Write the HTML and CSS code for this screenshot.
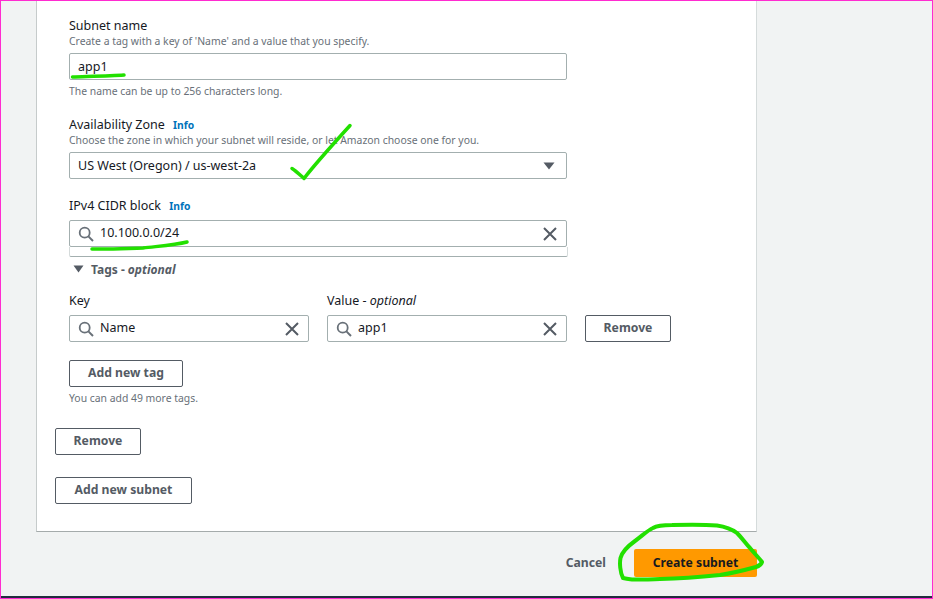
FILE: index.html
```html
<!DOCTYPE html>
<html lang="en">
<head>
    <meta charset="UTF-8">
    <title>Create subnet</title>
    <link rel="stylesheet" href="styles.css">
</head>
<body>
    <div class="page">
        <div class="card">
            <div class="subnet">
                <div class="field">
                    <div class="label">Subnet name</div>
                    <div class="desc">Create a tag with a key of 'Name' and a value that you specify.</div>
                    <div class="input"><span class="value">app1</span></div>
                    <div class="desc hint">The name can be up to 256 characters long.</div>
                </div>
                <div class="field">
                    <div class="label">Availability Zone <a class="info">Info</a></div>
                    <div class="desc">Choose the zone in which your subnet will reside, or let Amazon choose one for you.</div>
                    <div class="input select">
                        <span class="value">US West (Oregon) / us-west-2a</span>
                        <svg class="caret" width="12" height="8" viewBox="0 0 12 8"><path d="M0.5 0.5h11L6 7.5z" fill="#545b64"/></svg>
                    </div>
                </div>
                <div class="field cidr">
                    <div class="label label-tight">IPv4 CIDR block <a class="info">Info</a></div>
                    <div class="input">
                        <svg class="search" width="16" height="16" viewBox="0 0 16 16"><circle cx="6.7" cy="6.7" r="5" fill="none" stroke="#687078" stroke-width="1.8"/><path d="M10.4 10.4L15 15" stroke="#687078" stroke-width="2"/></svg>
                        <span class="value">10.100.0.0/24</span>
                        <svg class="clear" width="14" height="14" viewBox="0 0 14 14"><path d="M1 1l12 12M13 1L1 13" stroke="#545b64" stroke-width="2"/></svg>
                    </div>
                    <div class="dropdown-edge"></div>
                </div>
                <div class="tags-head">
                    <svg width="11" height="8" viewBox="0 0 11 8"><path d="M0.5 0.5h10L5.5 7.5z" fill="#545b64"/></svg>
                    <span>Tags - <em>optional</em></span>
                </div>
                <div class="tag-row">
                    <div class="tag-col">
                        <div class="label label-tight">Key</div>
                        <div class="input">
                            <svg class="search" width="16" height="16" viewBox="0 0 16 16"><circle cx="6.7" cy="6.7" r="5" fill="none" stroke="#687078" stroke-width="1.8"/><path d="M10.4 10.4L15 15" stroke="#687078" stroke-width="2"/></svg>
                            <span class="value">Name</span>
                            <svg class="clear" width="14" height="14" viewBox="0 0 14 14"><path d="M1 1l12 12M13 1L1 13" stroke="#545b64" stroke-width="2"/></svg>
                        </div>
                    </div>
                    <div class="tag-col">
                        <div class="label label-tight">Value - <em>optional</em></div>
                        <div class="input">
                            <svg class="search" width="16" height="16" viewBox="0 0 16 16"><circle cx="6.7" cy="6.7" r="5" fill="none" stroke="#687078" stroke-width="1.8"/><path d="M10.4 10.4L15 15" stroke="#687078" stroke-width="2"/></svg>
                            <span class="value">app1</span>
                            <svg class="clear" width="14" height="14" viewBox="0 0 14 14"><path d="M1 1l12 12M13 1L1 13" stroke="#545b64" stroke-width="2"/></svg>
                        </div>
                    </div>
                    <button class="btn remove-tag">Remove</button>
                </div>
                <button class="btn add-tag">Add new tag</button>
                <div class="desc tags-left">You can add 49 more tags.</div>
            </div>
            <button class="btn remove-subnet">Remove</button>
            <button class="btn add-subnet">Add new subnet</button>
        </div>
        <div class="actions">
            <a class="cancel">Cancel</a>
            <button class="btn-primary">Create subnet</button>
        </div>
    </div>
    <div class="footer-line"></div>
    <!-- green marker scribbles drawn over the screenshot -->
    <svg class="marks" width="933" height="599" viewBox="0 0 933 599" fill="none" stroke="#22e000" stroke-linecap="round" stroke-linejoin="round">
        <path d="M72.500 77C85 76.500 110 76 124 75" stroke-width="3.500"/>
        <path d="M292 168.500C296 171 300 175 304 178.500C312 168 335 142 350 125.500" stroke-width="3.500"/>
        <path d="M92 249C110 249.500 125 248.500 143 248C160 246 175 245 187 242" stroke-width="3.500"/>
        <path d="M632 579.500C628 579 625 578.500 623 578C620 572 619.500 563 620.500 558C622 552 628 546 635 541C642 536 648 530 653 528C658 525 665 525 672 525C690 524.500 705 524.500 717 525.500C727 527 733 530 737 533C743 539 746 544 750 548C754 553 759 558 762 562C761 565 759 566 756 567C745 570 733 573 720 575C700 577 680 578.500 660 579C650 579.500 640 579.500 632 579.500" stroke-width="4"/>
    </svg>
</body>
</html>
```

FILE: styles.css
```css
* {
    box-sizing: border-box;
}
html, body {
    margin: 0;
    padding: 0;
}
body {
    position: relative;
    width: 933px;
    height: 599px;
    overflow: hidden;
    background-color: #f1f3f3;
    border: 1px solid #ff2bd0;
    font-family: "Noto Sans", sans-serif;
    font-size: 12.5px;
    color: #16191f;
}
.page {
    height: 595px;
    padding-left: 35px;
    overflow: hidden;
}
.card {
    width: 721px;
    height: 531px;
    background-color: white;
    border-left: 1px solid #c6cbcb;
    border-bottom: 1px solid #a5abab;
    border-right: 1px solid #d5dbdb;
    padding-left: 18px;
}
.subnet {
    padding: 17px 0 0 14px;
}
.field {
    width: 498px;
    margin-bottom: 19px;
}
.label {
    line-height: 16px;
    height: 16px;
    white-space: nowrap;
}
.label-tight {
    margin-bottom: 6px;
}
.desc {
    font-size: 10.4px;
    line-height: 14px;
    color: #687078;
    white-space: nowrap;
}
.hint {
    margin-top: 4px;
}
.info {
    margin-left: 5px;
    font-size: 10.3px;
    font-weight: 700;
    color: #0073bb;
}
.input {
    display: flex;
    align-items: center;
    height: 27px;
    margin-top: 5px;
    padding: 0 9px 0 8px;
    border: 1px solid #a3afaf;
    border-radius: 2px;
    background-color: white;
}
.select {
    padding-right: 11px;
}
.label-tight + .input {
    margin-top: 0;
}
.value {
    flex: 1;
    white-space: nowrap;
}
.search {
    margin-right: 6px;
}
.search + .value {
    padding-bottom: 2px;
}
.cidr {
    margin-bottom: 0;
}
.dropdown-edge {
    height: 10px;
    margin-right: -1px;
    border: 1px solid #d5dbdb;
    border-top: none;
    border-bottom-color: #a3afaf;
    border-radius: 0 0 2px 2px;
}
.tags-head {
    display: flex;
    align-items: center;
    gap: 7px;
    height: 16px;
    margin: 4px 0 16px 4px;
    font-weight: 700;
    font-size: 12px;
    color: #545b64;
}
.tags-head em {
    font-weight: 700;
}
.tag-row {
    display: flex;
    align-items: flex-end;
    gap: 18px;
}
.tag-col {
    width: 240px;
}
.btn {
    display: block;
    height: 27px;
    padding: 0 0 2px;
    background-color: white;
    border: 1px solid #545b64;
    border-radius: 2px;
    font-family: inherit;
    font-size: 12.2px;
    font-weight: 700;
    color: #545b64;
}
.remove-tag {
    width: 86px;
}
.add-tag {
    margin-top: 18px;
    width: 114px;
}
.tags-left {
    margin-top: 4px;
}
.remove-subnet {
    margin-top: 23px;
    width: 86px;
}
.add-subnet {
    margin-top: 22px;
    width: 137px;
}
.actions {
    display: flex;
    align-items: center;
    justify-content: flex-end;
    width: 721px;
    margin-top: 17px;
    gap: 28px;
}
.cancel {
    padding-bottom: 2px;
    font-weight: 700;
    font-size: 12.2px;
    color: #545b64;
}
.btn-primary {
    width: 123px;
    height: 28px;
    padding: 0 0 2px;
    background-color: #ff9900;
    border: none;
    border-radius: 2px;
    font-family: inherit;
    font-size: 12.2px;
    font-weight: 700;
    color: #16191f;
}
.footer-line {
    height: 2px;
    background-color: #232f3e;
}
.marks {
    position: absolute;
    left: -1px;
    top: -1px;
}
```
